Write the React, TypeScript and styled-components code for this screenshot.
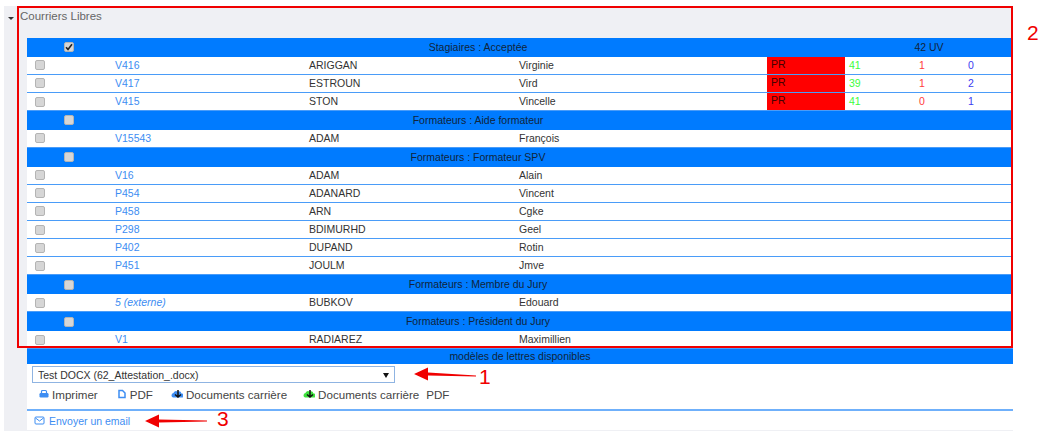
import { FC } from 'react';
import styled, { createGlobalStyle } from 'styled-components';

const GlobalStyle = createGlobalStyle`
  html, body {
    margin: 0;
    padding: 0;
    background: #fff;
    overflow: hidden;
  }
  body {
    font-family: 'Liberation Sans', Arial, sans-serif;
    font-size: 10.5px;
    color: #333;
  }
`;

const Page = styled.div`
  position: relative;
  width: 1041px;
  height: 434px;
  padding: 6px 28px 0 4px;
  box-sizing: border-box;
`;

const Panel = styled.section`
  background: #eff0f4;
  height: 425px;
  padding-left: 23px;
  display: flex;
  flex-direction: column;
`;

const PanelTitle = styled.div`
  position: relative;
  flex: none;
  height: 32px;
  margin-left: -7px;
  padding-top: 4px;
  box-sizing: border-box;
  font-size: 11.5px;
  color: #666;
`;

const Caret = styled.span`
  position: absolute;
  left: -12px;
  top: 11px;
  border-left: 3.5px solid transparent;
  border-right: 3.5px solid transparent;
  border-top: 3.5px solid #333;
`;

const Body = styled.div`
  background: #fff;
  flex: 1;
  min-height: 0;
`;

const GRID = '84px 194px 210px 252px 78px 70px 49px 49px';

const GroupHead = styled.div`
  display: grid;
  grid-template-columns: 84px 1fr 168px;
  align-items: center;
  height: 18.7px;
  background: #007bff;
  color: #10243a;
  text-align: center;
`;

const HeadText = styled.span`
  padding-bottom: 1.5px;
`;

const Row = styled.div`
  display: grid;
  grid-template-columns: ${GRID};
  align-items: center;
  height: 18.15px;
  box-sizing: border-box;
  border-bottom: 1px solid #4a9cf8;
`;

const Cell = styled.div<{ $color?: string }>`
  padding: 0 0 1px 4px;
  color: ${p => p.$color || '#333'};
  white-space: nowrap;
`;

const CheckCell = styled.div`
  padding-left: 8px;
  display: flex;
`;

const CodeLink = styled.a`
  color: #3d8df2;
  text-decoration: none;
  em {
    font-style: italic;
  }
`;

const StatusCell = styled.div`
  align-self: stretch;
  background: #ff0000;
  color: #450000;
  padding-left: 4px;
  line-height: 15px;
`;

const Box = styled.span`
  display: inline-flex;
  align-items: center;
  justify-content: center;
  width: 10px;
  height: 10px;
  box-sizing: border-box;
  background: #d6d6d6;
  border: 1px solid #b4b4b4;
  border-radius: 2px;
  margin: 0 auto;
`;

const RowBox = styled(Box)`
  margin: 0;
`;

const ModelsBar = styled.div`
  background: #007bff;
  color: #10243a;
  text-align: center;
  height: 15px;
  line-height: 14px;
`;

const SelectLine = styled.div`
  position: relative;
  padding: 2px 0 0 5px;
  height: 17px;
`;

const ModelSelect = styled.select`
  display: block;
  appearance: none;
  width: 363px;
  height: 17px;
  padding: 0 0 0 5px;
  box-sizing: border-box;
  background: #fff;
  border: 1px solid #8fb4e2;
  border-radius: 0;
  font: 10.5px 'Liberation Sans', Arial, sans-serif;
  color: #333;
`;

const SelectArrow = styled.span`
  position: absolute;
  left: 356px;
  top: 9px;
  border-left: 3px solid transparent;
  border-right: 3px solid transparent;
  border-top: 5px solid #111;
`;

const Actions = styled.div`
  display: flex;
  align-items: center;
  height: 22px;
  padding: 0 0 4px 12px;
  border-bottom: 2px solid #6fb0fb;
  font-size: 11.6px;
  color: #444;
`;

const Action = styled.span<{ $gap: number }>`
  display: inline-flex;
  align-items: center;
  gap: 3px;
  margin-right: ${p => p.$gap}px;
`;

const EmailLine = styled.div`
  display: flex;
  align-items: center;
  gap: 4px;
  height: 19px;
  padding-left: 7px;
  color: #3d8df2;
  border-bottom: 1px solid #eff0f4;
`;

// annotations pasted on top of the screenshot
const Frame = styled.div`
  position: absolute;
  left: 17px;
  top: 6px;
  width: 996px;
  height: 342px;
  box-sizing: border-box;
  border: 2px solid #f00000;
  pointer-events: none;
`;

const Mark = styled.span<{ $x: number; $y: number }>`
  position: absolute;
  left: ${p => p.$x}px;
  top: ${p => p.$y}px;
  color: #f00000;
  font-size: 21px;
  line-height: 24px;
`;

const Arrow = styled.svg<{ $x: number; $y: number }>`
  position: absolute;
  left: ${p => p.$x}px;
  top: ${p => p.$y}px;
`;

const Check = () => (
  <svg width="8" height="8" viewBox="0 0 8 8">
    <path d="M1 4.2 3 6.4 7 1.2" fill="none" stroke="#222" strokeWidth="1.6" />
  </svg>
);

const PrintIcon = () => (
  <svg width="10" height="10" viewBox="0 0 10 10">
    <path d="M2.5 4V2.5a1 1 0 0 1 1-1h3a1 1 0 0 1 1 1V4" fill="none" stroke="#3d8df2" strokeWidth="1.2" />
    <rect x="0.5" y="4" width="9" height="4.5" rx="1.2" fill="#3d8df2" />
  </svg>
);

const FileIcon = () => (
  <svg width="10" height="10" viewBox="0 0 10 10">
    <path d="M2 1.5h3.5L8 4v4.5H2z" fill="none" stroke="#3d8df2" strokeWidth="1.5" />
  </svg>
);

const CloudIcon: FC<{ color: string }> = ({ color }) => (
  <svg width="12" height="10" viewBox="0 0 12 10">
    <path d="M0.5 6.5a2.5 2.5 0 0 1 2-2.5 2.5 2.5 0 0 1 4-1.5 3 3 0 0 1 4 2 2 2 0 0 1 0.5 4H2a2 2 0 0 1-1.5-2z" fill={color} />
    <path d="M7 1v6.5M4 5.5l3 2.5 3-2.5" fill="none" stroke="#111" strokeWidth="1.5" />
  </svg>
);

const MailIcon = () => (
  <svg width="11" height="9" viewBox="0 0 11 9">
    <rect x="1" y="1" width="9" height="7" rx="1" fill="none" stroke="#3d8df2" />
    <path d="M1.5 2 5.5 5 9.5 2" fill="none" stroke="#3d8df2" />
  </svg>
);

type Person = {
  code: string;
  external?: boolean;
  last: string;
  first: string;
  scores?: [number, number, number];
};

type Group = {
  title: string;
  checked?: boolean;
  uv?: string;
  people: Person[];
};

const groups: Group[] = [
  {
    title: 'Stagiaires : Acceptée',
    checked: true,
    uv: '42 UV',
    people: [
      { code: 'V416', last: 'ARIGGAN', first: 'Virginie', scores: [41, 1, 0] },
      { code: 'V417', last: 'ESTROUN', first: 'Vird', scores: [39, 1, 2] },
      { code: 'V415', last: 'STON', first: 'Vincelle', scores: [41, 0, 1] },
    ],
  },
  {
    title: 'Formateurs : Aide formateur',
    people: [{ code: 'V15543', last: 'ADAM', first: 'François' }],
  },
  {
    title: 'Formateurs : Formateur SPV',
    people: [
      { code: 'V16', last: 'ADAM', first: 'Alain' },
      { code: 'P454', last: 'ADANARD', first: 'Vincent' },
      { code: 'P458', last: 'ARN', first: 'Cgke' },
      { code: 'P298', last: 'BDIMURHD', first: 'Geel' },
      { code: 'P402', last: 'DUPAND', first: 'Rotin' },
      { code: 'P451', last: 'JOULM', first: 'Jmve' },
    ],
  },
  {
    title: 'Formateurs : Membre du Jury',
    people: [{ code: '5', external: true, last: 'BUBKOV', first: 'Edouard' }],
  },
  {
    title: 'Formateurs : Président du Jury',
    people: [{ code: 'V1', last: 'RADIAREZ', first: 'Maximillien' }],
  },
];

const PersonRow: FC<{ person: Person }> = ({ person }) => (
  <Row>
    <CheckCell>
      <RowBox />
    </CheckCell>
    <Cell>
      <CodeLink>
        {person.external ? (
          <em>{person.code} (externe)</em>
        ) : (
          person.code
        )}
      </CodeLink>
    </Cell>
    <Cell>{person.last}</Cell>
    <Cell>{person.first}</Cell>
    {person.scores && (
      <>
        <StatusCell>PR</StatusCell>
        <Cell $color="#3dfc3d">{person.scores[0]}</Cell>
        <Cell $color="#ff3b3b">{person.scores[1]}</Cell>
        <Cell $color="#3b3bf0">{person.scores[2]}</Cell>
      </>
    )}
  </Row>
);

const App = () => (
  <Page>
    <GlobalStyle />
    <Panel>
      <PanelTitle>
        <Caret />
        Courriers Libres
      </PanelTitle>
      <Body>
        {groups.map(group => (
          <div key={group.title}>
            <GroupHead>
              <Box>{group.checked && <Check />}</Box>
              <HeadText>{group.title}</HeadText>
              <HeadText>{group.uv}</HeadText>
            </GroupHead>
            {group.people.map(person => (
              <PersonRow key={person.code} person={person} />
            ))}
          </div>
        ))}
        <ModelsBar>modèles de lettres disponibles</ModelsBar>
        <SelectLine>
          <ModelSelect>
            <option>Test DOCX (62_Attestation_.docx)</option>
          </ModelSelect>
          <SelectArrow />
        </SelectLine>
        <Actions>
          <Action $gap={19}>
            <PrintIcon />
            Imprimer
          </Action>
          <Action $gap={18}>
            <FileIcon />
            PDF
          </Action>
          <Action $gap={16}>
            <CloudIcon color="#3d8df2" />
            Documents carrière
          </Action>
          <Action $gap={7}>
            <CloudIcon color="#3de03d" />
            Documents carrière
          </Action>
          <Action $gap={0}>PDF</Action>
        </Actions>
        <EmailLine>
          <MailIcon />
          Envoyer un email
        </EmailLine>
      </Body>
    </Panel>
    <Frame />
    <Mark $x={1027} $y={21}>2</Mark>
    <Mark $x={479} $y={365}>1</Mark>
    <Mark $x={217} $y={407}>3</Mark>
    <Arrow $x={414} $y={366} width="64" height="16" viewBox="0 0 64 16">
      <path d="M0 8 14 1.5V6.5L62 9.5V10.5L14 9.5V14.5z" fill="#f00000" />
    </Arrow>
    <Arrow $x={145} $y={413} width="64" height="16" viewBox="0 0 64 16">
      <path d="M0 8 14 1.5V6.5L62 7.5V8.5L14 9.5V14.5z" fill="#f00000" />
    </Arrow>
  </Page>
);

export default App;
